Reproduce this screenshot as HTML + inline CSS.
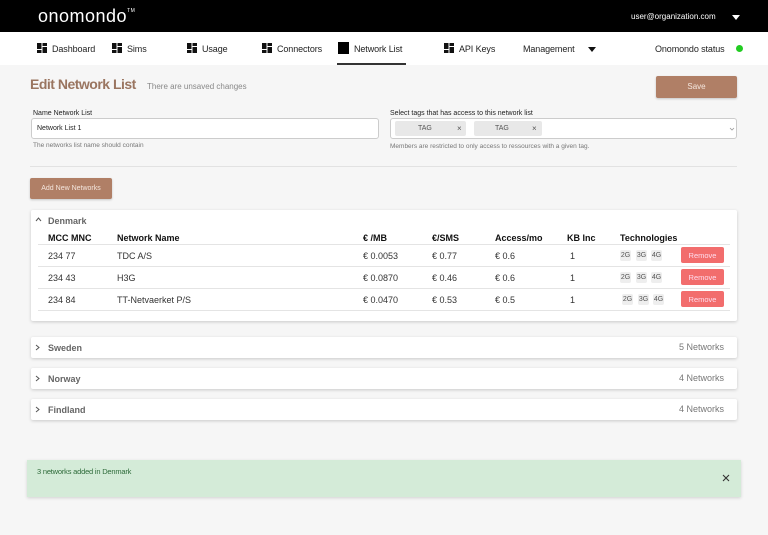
<!DOCTYPE html>
<html><head><meta charset="utf-8"><style>
*{box-sizing:border-box;margin:0;padding:0}
body{width:768px;height:535px;background:#f6f6f6;font-family:"Liberation Sans",sans-serif;position:relative;overflow:hidden;color:#222}
.a{position:absolute}
.hdr{left:0;top:0;width:768px;height:32px;background:#000}
.nav{left:0;top:32px;width:768px;height:33px;background:#fff}
.ni{position:absolute;top:44px;font-size:9px;color:#222;letter-spacing:-0.1px}
.ic{position:absolute;top:43px}
.card{position:absolute;left:31px;width:706px;background:#fff;border-radius:2px;box-shadow:0 1px 3px rgba(0,0,0,.18)}
.cr{font-size:9px;color:#333}
.th{font-size:9px;font-weight:bold;color:#111;top:233px}
.line{position:absolute;left:38px;width:692px;height:1px;background:#e4e4e4}
.tech{position:absolute;font-size:7px;color:#555;background:#eee;border-radius:2px;width:11px;height:11px;display:flex;align-items:center;justify-content:center}
.rm{position:absolute;left:681px;width:43px;height:16px;background:#f26d6d;color:#fde;font-size:7.5px;display:flex;align-items:center;justify-content:center;border-radius:2px}
.cty{position:absolute;left:48px;font-size:9px;font-weight:bold;color:#666}
.cnt{position:absolute;left:660px;width:64px;text-align:right;font-size:9px;color:#777}
.chev{position:absolute;left:35px}
</style></head><body>
<div class="a hdr"></div>
<div class="a" style="left:38px;top:6px;font-size:18px;color:#fff;letter-spacing:0.5px">onomondo<sup style="font-size:5px;vertical-align:10px">TM</sup></div>
<div class="a" style="left:631px;top:12px;font-size:8px;color:#fff">user@organization.com</div>
<div class="a" style="left:732px;top:15px;width:0;height:0;border-left:4px solid transparent;border-right:4px solid transparent;border-top:5px solid #fff"></div>
<div class="a nav"></div>
<svg class="ic" style="left:37px" width="10" height="10"><rect x="0" y="0" width="4.5" height="6" fill="#111"/><rect x="0" y="7" width="4.5" height="3" fill="#111"/><rect x="5.5" y="0" width="4.5" height="3" fill="#111"/><rect x="5.5" y="4" width="4.5" height="6" fill="#111"/></svg>
<div class="ni" style="left:52px">Dashboard</div>
<svg class="ic" style="left:112px" width="10" height="10"><rect x="0" y="0" width="4.5" height="6" fill="#111"/><rect x="0" y="7" width="4.5" height="3" fill="#111"/><rect x="5.5" y="0" width="4.5" height="3" fill="#111"/><rect x="5.5" y="4" width="4.5" height="6" fill="#111"/></svg>
<div class="ni" style="left:127px">Sims</div>
<svg class="ic" style="left:187px" width="10" height="10"><rect x="0" y="0" width="4.5" height="6" fill="#111"/><rect x="0" y="7" width="4.5" height="3" fill="#111"/><rect x="5.5" y="0" width="4.5" height="3" fill="#111"/><rect x="5.5" y="4" width="4.5" height="6" fill="#111"/></svg>
<div class="ni" style="left:202px">Usage</div>
<svg class="ic" style="left:262px" width="10" height="10"><rect x="0" y="0" width="4.5" height="6" fill="#111"/><rect x="0" y="7" width="4.5" height="3" fill="#111"/><rect x="5.5" y="0" width="4.5" height="3" fill="#111"/><rect x="5.5" y="4" width="4.5" height="6" fill="#111"/></svg>
<div class="ni" style="left:277px">Connectors</div>
<div class="a" style="left:338px;top:42px;width:11px;height:12px;background:#000"></div>
<div class="ni" style="left:354px">Network List</div>
<div class="a" style="left:337px;top:63px;width:69px;height:2px;background:#333"></div>
<svg class="ic" style="left:444px" width="10" height="10"><rect x="0" y="0" width="4.5" height="6" fill="#111"/><rect x="0" y="7" width="4.5" height="3" fill="#111"/><rect x="5.5" y="0" width="4.5" height="3" fill="#111"/><rect x="5.5" y="4" width="4.5" height="6" fill="#111"/></svg>
<div class="ni" style="left:459px">API Keys</div>
<div class="ni" style="left:523px">Management</div>
<div class="a" style="left:588px;top:47px;width:0;height:0;border-left:4px solid transparent;border-right:4px solid transparent;border-top:5px solid #111"></div>
<div class="ni" style="left:655px">Onomondo status</div>
<div class="a" style="left:736px;top:45px;width:7px;height:7px;border-radius:50%;background:#2c2"></div>

<div class="a" style="left:30px;top:76px;font-size:14px;font-weight:bold;color:#9a7560;letter-spacing:-0.5px">Edit Network List</div>
<div class="a" style="left:147px;top:82px;font-size:8px;color:#888">There are unsaved changes</div>
<div class="a" style="left:656px;top:76px;width:81px;height:22px;background:#b07f66;border-radius:2px;color:#f4e6dd;font-size:8px;text-align:center;line-height:22px;box-shadow:0 1px 2px rgba(0,0,0,.2)">Save</div>

<div class="a" style="left:33px;top:110px;font-size:7px;color:#222">Name Network List</div>
<div class="a" style="left:31px;top:118px;width:348px;height:21px;background:#fff;border:1px solid #ccc;border-radius:3px"></div>
<div class="a" style="left:37px;top:125px;font-size:7px;color:#222">Network List 1</div>
<div class="a" style="left:33px;top:142px;font-size:6.5px;color:#777">The networks list name should contain</div>

<div class="a" style="left:390px;top:110px;font-size:7px;color:#222">Select tags that has access to this network list</div>
<div class="a" style="left:390px;top:118px;width:347px;height:21px;background:#fff;border:1px solid #ccc;border-radius:3px"></div>
<div class="a" style="left:395px;top:121px;width:71px;height:15px;background:#e8e8e8;border-radius:2px"></div>
<div class="a" style="left:418px;top:125px;font-size:7px;color:#555">TAG</div>
<div class="a" style="left:457px;top:124px;font-size:8px;color:#555">×</div>
<div class="a" style="left:474px;top:121px;width:68px;height:15px;background:#e8e8e8;border-radius:2px"></div>
<div class="a" style="left:495px;top:125px;font-size:7px;color:#555">TAG</div>
<div class="a" style="left:532px;top:124px;font-size:8px;color:#555">×</div>
<svg class="a" style="left:729px;top:127px" width="6" height="4"><path d="M1 1 L3 3 L5 1" stroke="#999" stroke-width="0.8" fill="none"/></svg>
<div class="a" style="left:390px;top:143px;font-size:6.5px;color:#777">Members are restricted to only access to ressources with a given tag.</div>

<div class="a" style="left:30px;top:166px;width:707px;height:1px;background:#e2e2e2"></div>
<div class="a" style="left:30px;top:178px;width:82px;height:21px;background:#b07f66;border-radius:2px;color:#f4e6dd;font-size:7px;text-align:center;line-height:21px;box-shadow:0 1px 2px rgba(0,0,0,.2)">Add New Networks</div>

<div class="card" style="top:210px;height:111px"></div>
<svg class="chev" style="top:217px" width="7" height="5"><path d="M1 4 L3.5 1 L6 4" stroke="#555" stroke-width="1" fill="none"/></svg>
<div class="cty" style="top:216px">Denmark</div>
<div class="a th" style="left:48px">MCC MNC</div>
<div class="a th" style="left:117px">Network Name</div>
<div class="a th" style="left:363px">€ /MB</div>
<div class="a th" style="left:432px">€/SMS</div>
<div class="a th" style="left:495px">Access/mo</div>
<div class="a th" style="left:567px">KB Inc</div>
<div class="a th" style="left:620px">Technologies</div>
<div class="line" style="top:244px"></div>
<div class="line" style="top:266px"></div>
<div class="line" style="top:288px"></div>
<div class="line" style="top:310px"></div>

<div class="a cr" style="left:48px;top:251px">234 77</div><div class="a cr" style="left:117px;top:251px">TDC A/S</div><div class="a cr" style="left:363px;top:251px">€ 0.0053</div><div class="a cr" style="left:432px;top:251px">€ 0.77</div><div class="a cr" style="left:495px;top:251px">€ 0.6</div><div class="a cr" style="left:570px;top:251px">1</div>
<div class="tech" style="left:620px;top:250px">2G</div><div class="tech" style="left:636px;top:250px">3G</div><div class="tech" style="left:651px;top:250px">4G</div>
<div class="rm" style="top:247px">Remove</div>

<div class="a cr" style="left:48px;top:273px">234 43</div><div class="a cr" style="left:117px;top:273px">H3G</div><div class="a cr" style="left:363px;top:273px">€ 0.0870</div><div class="a cr" style="left:432px;top:273px">€ 0.46</div><div class="a cr" style="left:495px;top:273px">€ 0.6</div><div class="a cr" style="left:570px;top:273px">1</div>
<div class="tech" style="left:620px;top:272px">2G</div><div class="tech" style="left:636px;top:272px">3G</div><div class="tech" style="left:651px;top:272px">4G</div>
<div class="rm" style="top:269px">Remove</div>

<div class="a cr" style="left:48px;top:295px">234 84</div><div class="a cr" style="left:117px;top:295px">TT-Netvaerket P/S</div><div class="a cr" style="left:363px;top:295px">€ 0.0470</div><div class="a cr" style="left:432px;top:295px">€ 0.53</div><div class="a cr" style="left:495px;top:295px">€ 0.5</div><div class="a cr" style="left:570px;top:295px">1</div>
<div class="tech" style="left:622px;top:294px">2G</div><div class="tech" style="left:638px;top:294px">3G</div><div class="tech" style="left:653px;top:294px">4G</div>
<div class="rm" style="top:291px">Remove</div>

<div class="card" style="top:337px;height:21px"></div>
<svg class="chev" style="top:344px" width="5" height="7"><path d="M1 1 L4 3.5 L1 6" stroke="#555" stroke-width="1" fill="none"/></svg><div class="cty" style="top:343px">Sweden</div><div class="cnt" style="top:342px">5 Networks</div>
<div class="card" style="top:368px;height:21px"></div>
<svg class="chev" style="top:375px" width="5" height="7"><path d="M1 1 L4 3.5 L1 6" stroke="#555" stroke-width="1" fill="none"/></svg><div class="cty" style="top:374px">Norway</div><div class="cnt" style="top:373px">4 Networks</div>
<div class="card" style="top:399px;height:21px"></div>
<svg class="chev" style="top:406px" width="5" height="7"><path d="M1 1 L4 3.5 L1 6" stroke="#555" stroke-width="1" fill="none"/></svg><div class="cty" style="top:405px">Findland</div><div class="cnt" style="top:404px">4 Networks</div>

<div class="a" style="left:27px;top:460px;width:714px;height:37px;background:#d4ebd8;box-shadow:0 1px 3px rgba(0,0,0,.15)"></div>
<div class="a" style="left:37px;top:467px;font-size:7.5px;color:#2e6b3a;letter-spacing:-0.2px">3 networks added in Denmark</div>
<svg class="a" style="left:722px;top:474px" width="8" height="8"><path d="M1 1 L7 7 M7 1 L1 7" stroke="#333" stroke-width="1.1"/></svg>
</body></html>
